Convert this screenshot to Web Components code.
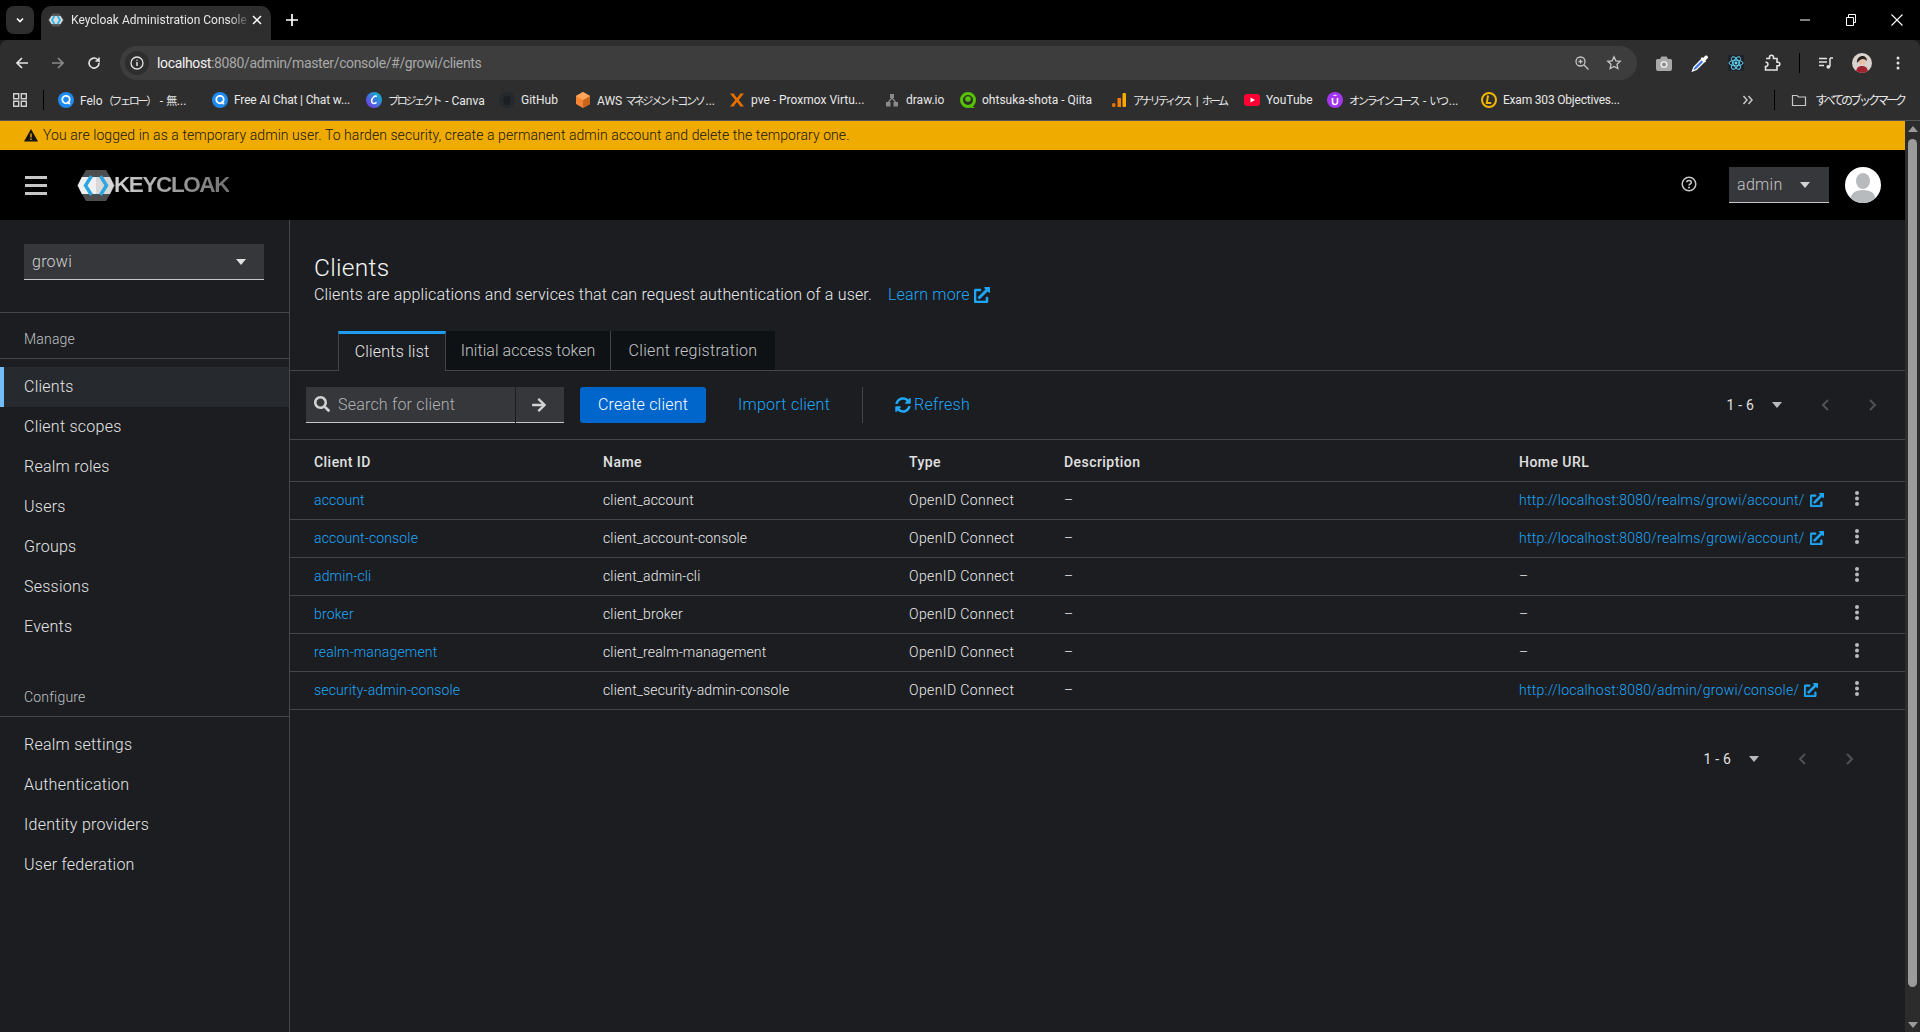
<!DOCTYPE html>
<html>
<head>
<meta charset="utf-8">
<title>Keycloak Administration Console</title>
<style>
  html, body { margin: 0; height: 100%; background: #1b1d21; overflow: hidden; }
  body { display: flex; flex-direction: column; font-family: Roboto, "Noto Sans CJK JP", sans-serif; }
  .under { display: flex; flex: 1; min-height: 0; }
  .page { flex: 1; min-width: 0; display: flex; flex-direction: column; }
  .work { flex: 1; display: flex; min-height: 0; }
  .cj { font-size: 11px; letter-spacing: -2.300px; margin-right: 2px; }
  .cj3 { font-size: 11px; letter-spacing: -2.700px; margin-right: 3px; }
</style>
</head>
<body>
<tab-strip></tab-strip>
<url-bar></url-bar>
<bookmark-bar>
  <book-mark w="154" icon="q">Felo<span class="cj">（フェロー）</span> - <span class="cj">無</span>...</book-mark>
  <book-mark w="154" icon="q" style="letter-spacing:-.15px">Free AI Chat | Chat w...</book-mark>
  <book-mark w="133" icon="c"><span class="cj">プロジェクト</span> - Canva</book-mark>
  <book-mark w="76" icon="gh">GitHub</book-mark>
  <book-mark w="154" icon="aws">AWS <span class="cj">マネジメントコンソ</span>...</book-mark>
  <book-mark w="155" icon="x">pve - Proxmox Virtu...</book-mark>
  <book-mark w="76" icon="draw">draw.io</book-mark>
  <book-mark w="151" icon="qiita">ohtsuka-shota - Qiita</book-mark>
  <book-mark w="133" icon="ga"><span class="cj3">アナリティクス</span> | <span class="cj3">ホーム</span></book-mark>
  <book-mark w="83" icon="yt">YouTube</book-mark>
  <book-mark w="154" icon="u"><span class="cj">オンラインコース</span> - <span class="cj">いつ</span>...</book-mark>
  <book-mark w="150" icon="l" style="letter-spacing:-.2px">Exam 303 Objectives...</book-mark>
</bookmark-bar>
<div class="under">
  <div class="page">
    <warn-banner>You are logged in as a temporary admin user. To harden security, create a permanent admin account and delete the temporary one.</warn-banner>
    <kc-masthead></kc-masthead>
    <div class="work">
      <kc-sidebar></kc-sidebar>
      <kc-clients></kc-clients>
    </div>
  </div>
  <page-scroll></page-scroll>
</div>

<script>
const ICONS = {
  q: `<circle cx="8" cy="8" r="8" fill="#1f8bf0"/><circle cx="8" cy="7.6" r="3.7" fill="none" stroke="#fff" stroke-width="1.8"/><path d="M9.5 9.5l2.4 2.6" stroke="#fff" stroke-width="1.8"/>`,
  c: `<defs><linearGradient id="cv" x1="0" y1="1" x2="1" y2="0"><stop offset="0" stop-color="#7d2ae8"/><stop offset="1" stop-color="#00c4cc"/></linearGradient></defs><circle cx="8" cy="8" r="8" fill="url(#cv)"/><path d="M10.8 4.6C9 2.9 5.8 6 5.6 9c-.2 2.700 2.600 3.200 5 1.300" fill="none" stroke="#fff" stroke-width="1.500"/>`,
  gh: `<circle cx="8" cy="8" r="8" fill="#24292e"/><path d="M5 13V10C3.800 8.500 4 6.500 4.800 5.500V3.800l1.800.8a6 6 0 0 1 2.800 0l1.800-.8v1.700c.8 1 1 3 -.2 4.500v3z" fill="#1b1f23"/>`,
  aws: `<path d="M8 0l7 4v8l-7 4-7-4V4z" fill="#f58534"/><path d="M8 8l7-4v8l-7 4z" fill="#c8641b"/><path d="M8 0l7 4-7 4-7-4z" fill="#ffa559"/>`,
  x: `<path d="M1 1.500h3.600L8 6l3.400-4.500H15L9.800 8l5.200 6.500h-3.600L8 10l-3.400 4.500H1L6.200 8z" fill="#e57000"/>`,
  draw: `<rect x="6" y="2" width="4" height="4" fill="#8a8a8a"/><rect x="2" y="10" width="4.500" height="4.500" fill="#8a8a8a"/><rect x="9.500" y="10" width="4.500" height="4.500" fill="#8a8a8a"/><path d="M8 6L4.500 10M8 6l3.500 4" stroke="#8a8a8a" stroke-width="1.200"/>`,
  qiita: `<circle cx="8" cy="8" r="6.500" fill="none" stroke="#55c500" stroke-width="3"/><circle cx="8" cy="7" r="2.800" fill="#55c500"/><path d="M12 14l3 2h-4z" fill="#55c500"/>`,
  ga: `<rect x="1" y="11" width="3.500" height="4" rx="1.500" fill="#e37400"/><rect x="6.500" y="6" width="3.500" height="9" fill="#f57c00"/><rect x="11.500" y="1" width="3.500" height="14" rx="1" fill="#f9ab00"/>`,
  yt: `<rect x="0" y="2" width="16" height="12" rx="3" fill="#ff0033"/><path d="M6.500 5.500v5L11 8z" fill="#fff"/>`,
  u: `<circle cx="8" cy="8" r="8" fill="#a435f0"/><path d="M5.500 6v4a2.500 2.500 0 0 0 5 0V6" fill="none" stroke="#fff" stroke-width="1.600"/><path d="M8 2.500l2.500 1.300H5.500z" fill="#fff"/>`,
  l: `<circle cx="8" cy="8" r="7" fill="none" stroke="#f2b400" stroke-width="2"/><path d="M7 3.500L5.800 11h4.400" fill="none" stroke="#f2b400" stroke-width="2"/>`
};
const EXT = `<svg viewBox="0 0 512 512" width="14" height="14" fill="currentColor" stroke="currentColor" stroke-width="18"><path d="M432 320h-32a16 16 0 0 0-16 16v112H64V128h144a16 16 0 0 0 16-16V80a16 16 0 0 0-16-16H48a48 48 0 0 0-48 48v352a48 48 0 0 0 48 48h352a48 48 0 0 0 48-48V336a16 16 0 0 0-16-16zM488 0H360c-21.400 0-32 25.900-17 41l35.700 35.700L135 320.400a24 24 0 0 0 0 34l22.600 22.600a24 24 0 0 0 34 0l243.700-243.700L471 169c15 15 41 4.500 41-17V24a24 24 0 0 0-24-24z"/></svg>`;

class TabStrip extends HTMLElement {
  constructor() {
    super();
    this.attachShadow({ mode: 'open' }).innerHTML = `<style>
      :host { display: flex; height: 40px; background: #000; color: #fff; font: 12px Roboto, sans-serif; align-items: flex-end; flex: none; }
      .sw { width: 28px; height: 28px; margin: 0 7px 6px 6px; border-radius: 8px; background: #2e2e2e; display: flex; align-items: center; justify-content: center; }
      .tab { width: 230px; height: 34px; background: #2e2e2e; border-radius: 10px 10px 0 0; display: flex; align-items: center; box-sizing: border-box; padding: 0 8px 6px 7px; }
      .tab span { flex: 1; margin-left: 7px; white-space: nowrap; overflow: hidden; color: #e6e6e6; -webkit-mask-image: linear-gradient(90deg,#000 88%,transparent); mask-image: linear-gradient(90deg,#000 88%,transparent); }
      .plus { margin: 0 0 6px 14px; height: 28px; display: flex; align-items: center; }
      .win { margin-left: auto; display: flex; height: 40px; align-items: center; padding-right: 15px; }
      .win svg { display: block; margin-left: 30px; }
    </style>
    <div class="sw"><svg width="12" height="12" viewBox="0 0 12 12"><path d="M3 4.500L6 7.500 9 4.500" fill="none" stroke="#fff" stroke-width="1.600"/></svg></div>
    <div class="tab">
      <svg width="16" height="16" viewBox="0 0 16 16"><path d="M4.500 1.500h7L16 8l-4.500 6.500h-7L0 8z" fill="#555"/><path d="M1 8l2.500-4h9L15 8l-2.500 4h-9z" fill="#dcdcdc"/><path d="M6.500 4L4 8l2.500 4M9.500 4L12 8l-2.500 4" fill="none" stroke="#2db5ee" stroke-width="1.800"/></svg>
      <span>Keycloak Administration Console</span>
      <svg width="12" height="12" viewBox="0 0 12 12"><path d="M2 2l8 8M10 2l-8 8" stroke="#fff" stroke-width="1.500"/></svg>
    </div>
    <div class="plus"><svg width="14" height="14" viewBox="0 0 14 14"><path d="M7 1v12M1 7h12" stroke="#fff" stroke-width="1.700"/></svg></div>
    <div class="win">
      <svg style="margin-left:0" width="16" height="16" viewBox="0 0 16 16"><path d="M3 8h10" stroke="#fff"/></svg>
      <svg width="16" height="16" viewBox="0 0 16 16"><path d="M3.500 5.500h7v8h-7zM5.500 5.500v-3h7v8h-2" fill="none" stroke="#fff"/></svg>
      <svg width="16" height="16" viewBox="0 0 16 16"><path d="M2.500 2.500l11 11M13.500 2.500l-11 11" stroke="#fff" stroke-width="1.100"/></svg>
    </div>`;
  }
}
customElements.define('tab-strip', TabStrip);

class UrlBar extends HTMLElement {
  constructor() {
    super();
    this.attachShadow({ mode: 'open' }).innerHTML = `<style>
      :host { display: flex; height: 40px; background: #2e2e2e; box-sizing: border-box; padding-top: 6px; align-items: stretch; flex: none; font: 14px Roboto, sans-serif; border-radius: 8px 8px 0 0; }
      .nav { width: 120px; display: flex; align-items: center; padding-left: 14px; gap: 20px; box-sizing: border-box; }
      .omni { width: 1517px; background: #3d3d3d; border-radius: 17px; display: flex; align-items: center; box-sizing: border-box; padding: 0 0 0 5px; }
      .i { width: 24px; height: 24px; border-radius: 50%; background: #2e2e2e; display: flex; align-items: center; justify-content: center; }
      .url { margin-left: 8px; color: #a8a8a8; flex: 1; letter-spacing: -.36px; }
      .url b { font-weight: 400; color: #f2f2f2; }
      .omni-end { display: flex; gap: 16px; padding-right: 15px; align-items: center; }
      .ext { display: flex; align-items: center; flex: 1; padding-left: 9px; }
      .slot { width: 36px; display: flex; align-items: center; justify-content: center; flex: none; }
      .sep { width: 1px; height: 20px; background: #000; margin: 0 8px 0 9px; flex: none; }
      svg { display: block; flex: none; }
    </style>
    <div class="nav">
      <svg width="16" height="16" viewBox="0 0 16 16"><path d="M14 8H3M8 3L3 8l5 5" fill="none" stroke="#e3e3e3" stroke-width="1.700"/></svg>
      <svg width="16" height="16" viewBox="0 0 16 16"><path d="M2 8h11M8 3l5 5-5 5" fill="none" stroke="#8a8a8a" stroke-width="1.700"/></svg>
      <svg width="16" height="16" viewBox="0 0 16 16"><path d="M13 8a5 5 0 1 1-1.500-3.500L13 6V2.500M13 6H9.500" fill="none" stroke="#e3e3e3" stroke-width="1.600"/></svg>
    </div>
    <div class="omni">
      <div class="i"><svg width="16" height="16" viewBox="0 0 16 16"><circle cx="8" cy="8" r="6" fill="none" stroke="#e3e3e3" stroke-width="1.300"/><path d="M8 7v4M8 4.800v1" stroke="#e3e3e3" stroke-width="1.500"/></svg></div>
      <div class="url"><b>localhost</b>:8080/admin/master/console/#/growi/clients</div>
      <div class="omni-end">
        <svg width="16" height="16" viewBox="0 0 16 16"><circle cx="6.500" cy="6.500" r="4.500" fill="none" stroke="#c7c7c7" stroke-width="1.300"/><path d="M10 10l4.500 4.500M4.500 6.500h4M6.500 4.500v4" stroke="#c7c7c7" stroke-width="1.300"/></svg>
        <svg width="16" height="16" viewBox="0 0 16 16"><path d="M8 1.800l1.900 4 4.300.5-3.200 3 .9 4.300L8 11.400l-3.900 2.200.9-4.300-3.200-3 4.300-.5z" fill="none" stroke="#c7c7c7" stroke-width="1.300"/></svg>
      </div>
    </div>
    <div class="ext">
      <div class="slot"><svg width="16" height="15" viewBox="0 0 16 15"><path d="M0 4.500q0-1.500 1.500-1.500H4L5.500 .5h5L12 3h2.500Q16 3 16 4.500V13q0 2-2 2H2q-2 0-2-2z" fill="#a8a8a8"/><circle cx="8" cy="8.500" r="3.600" fill="#e8e8e8"/><circle cx="8" cy="8.500" r="2" fill="#8a8a8a"/></svg></div>
      <div class="slot"><svg width="18" height="18" viewBox="0 0 18 18"><path d="M10.500 5.500L3 13l-1.500 4 4-1.500L13 8z" fill="#3f74e0" stroke="#fff" stroke-width="1.300"/><path d="M9.500 4l4.500 4.500 1.200-1.200-.8-.8 2.300-2.300c1.200-1.200-1.200-3.600-2.400-2.400L12 4.100l-.8-.8z" fill="#fff"/></svg></div>
      <div class="slot"><svg width="16" height="16" viewBox="0 0 16 16"><rect width="16" height="16" fill="#20232a"/><g fill="none" stroke="#61dafb" stroke-width=".9"><ellipse cx="8" cy="8" rx="7" ry="2.800"/><ellipse cx="8" cy="8" rx="7" ry="2.800" transform="rotate(60 8 8)"/><ellipse cx="8" cy="8" rx="7" ry="2.800" transform="rotate(120 8 8)"/></g><circle cx="8" cy="8" r="1.400" fill="#61dafb"/></svg></div>
      <div class="slot"><svg width="18" height="18" viewBox="0 0 18 18"><path d="M3 4.500h3.500V3.200a2 2 0 0 1 4 0v1.300H14v3.700h1a1.800 1.800 0 0 1 0 3.600h-1V16H2.500v-3.500h1a2.300 2.300 0 0 0 0-4.300h-1" fill="none" stroke="#e3e3e3" stroke-width="1.600"/></svg></div>
      <div class="sep"></div>
      <div class="slot"><svg width="16" height="16" viewBox="0 0 16 16"><path d="M1 3.500h8M1 7h8M1 10.500h5" stroke="#e3e3e3" stroke-width="1.300"/><path d="M12 3v8.500" stroke="#e3e3e3" stroke-width="1.500"/><circle cx="10.300" cy="11.800" r="1.900" fill="#e3e3e3"/><path d="M12 3h3" stroke="#e3e3e3" stroke-width="1.500"/></svg></div>
      <div class="slot"><svg width="20" height="20" viewBox="0 0 20 20"><defs><clipPath id="me"><circle cx="10" cy="10" r="10"/></clipPath></defs><g clip-path="url(#me)"><rect width="20" height="20" fill="#d9d2cc"/><path d="M4 20c0-6 3-7 6-7s6 1 6 7z" fill="#a3222f"/><circle cx="10" cy="8.500" r="3.300" fill="#e7bfa6"/><path d="M5 10C4 2 15 0 15 8c-3-3-6-3-10 2z" fill="#2b2522"/></g></svg></div>
      <div class="slot"><svg width="16" height="16" viewBox="0 0 16 16" fill="#e3e3e3"><circle cx="8" cy="3" r="1.500"/><circle cx="8" cy="8" r="1.500"/><circle cx="8" cy="13" r="1.500"/></svg></div>
    </div>`;
  }
}
customElements.define('url-bar', UrlBar);

class BookMark extends HTMLElement {
  connectedCallback() {
    if (this.shadowRoot) return;
    const w = this.getAttribute('w');
    this.attachShadow({ mode: 'open' }).innerHTML = `<style>
      :host { display: flex; align-items: center; width: ${w}px; flex: none; font: 12px Roboto, "Noto Sans CJK JP", sans-serif; color: #e8e8e8; white-space: nowrap; }
      svg { display: block; flex: none; margin-right: 6px; }
    </style><svg width="16" height="16" viewBox="0 0 16 16">${ICONS[this.getAttribute('icon')]}</svg><span><slot></slot></span>`;
  }
}
customElements.define('book-mark', BookMark);

class BookmarkBar extends HTMLElement {
  constructor() {
    super();
    this.attachShadow({ mode: 'open' }).innerHTML = `<style>
      :host { display: flex; align-items: center; height: 41px; box-sizing: border-box; background: #2e2e2e; border-bottom: 1px solid #555; flex: none; padding-bottom: 1px; font: 12px Roboto, "Noto Sans CJK JP", sans-serif; color: #e8e8e8; }
      .apps { width: 43px; display: flex; padding-left: 13px; box-sizing: border-box; }
      .sep { width: 1px; height: 20px; background: #000; flex: none; }
      .list { display: flex; margin-left: 14px; flex: 1; }
      .more { width: 32px; display: flex; }
      .tail { display: flex; align-items: center; padding-right: 13px; gap: 8px; white-space: nowrap; margin-left: 16px; }
      .tail span { letter-spacing: -3px; margin-right: 3px; }
      svg { display: block; flex: none; }
    </style>
    <div class="apps"><svg width="14" height="14" viewBox="0 0 14 14"><path d="M.7.7h5v5h-5zM8.300.7h5v5h-5zM.7 8.300h5v5h-5zM8.300 8.300h5v5h-5z" fill="none" stroke="#d0d0d0" stroke-width="1.400"/></svg></div>
    <div class="sep"></div>
    <div class="list"><slot></slot></div>
    <div class="more"><svg width="12" height="12" viewBox="0 0 12 12"><path d="M1.500 2L5 6l-3.500 4M6.500 2L10 6l-3.500 4" fill="none" stroke="#c7c7c7" stroke-width="1.500"/></svg></div>
    <div class="sep"></div>
    <div class="tail">
      <svg width="16" height="16" viewBox="0 0 16 16"><path d="M1.500 3.500h4.500l1.500 1.500h7v8.500h-13z" fill="none" stroke="#c7c7c7" stroke-width="1.200"/></svg>
      <span>すべてのブックマーク</span>
    </div>`;
  }
}
customElements.define('bookmark-bar', BookmarkBar);

class WarnBanner extends HTMLElement {
  constructor() {
    super();
    this.attachShadow({ mode: 'open' }).innerHTML = `<style>
      :host { display: flex; align-items: center; height: 29px; background: #f0ab00; color: #151515; font: 300 14px Roboto, sans-serif; letter-spacing: .07px; padding: 0 0 1px 24px; box-sizing: border-box; gap: 5px; flex: none; }
      svg { display: block; flex: none; }
    </style>
    <svg width="14" height="13" viewBox="0 0 14 13"><path d="M7 0l7 12.500H0z" fill="#151515"/><path d="M7 4.500v4M7 9.500v1.500" stroke="#f0ab00" stroke-width="1.400"/></svg><slot></slot>`;
  }
}
customElements.define('warn-banner', WarnBanner);

class KcMasthead extends HTMLElement {
  constructor() {
    super();
    this.attachShadow({ mode: 'open' }).innerHTML = `<style>
      :host { display: flex; align-items: center; height: 70px; background: #000; flex: none; font: 300 16px Roboto, sans-serif; color: #c7c7c7; }
      .burger { margin-left: 25px; width: 22px; height: 19px; display: flex; flex-direction: column; justify-content: space-between; }
      .burger i { display: block; height: 3px; background: #c7c7c7; }
      .logo { display: flex; align-items: center; margin-left: 30px; }
      .word { font: 700 22.500px "Liberation Sans", sans-serif; letter-spacing: -1.400px; margin-left: -1px; background: linear-gradient(90deg,#d2d2d2,#707070); -webkit-background-clip: text; background-clip: text; color: transparent; }
      .right { margin-left: auto; display: flex; align-items: center; }
      .sel { width: 100px; height: 36px; background: #36373a; border-bottom: 1px solid #c7c7c7; box-sizing: border-box; margin-left: 32px; display: flex; align-items: center; padding: 0 8px; letter-spacing: .3px; }
      .sel span { flex: 1; }
      .car { width: 0; height: 0; border: 5px solid transparent; border-top: 6px solid #d2d2d2; border-bottom: 0; margin-right: 11px; }
      .ava { width: 36px; height: 36px; margin: 0 24px 0 16px; display: block; }
      svg { display: block; }
      .help { margin-bottom: 2px; }
    </style>
    <div class="burger"><i></i><i></i><i></i></div>
    <div class="logo">
      <svg width="38" height="31" viewBox="0 0 38 31"><path d="M9 0h20l9 15.500L29 31H9L0 15.500z" fill="#4d4d4d"/><path d="M1 15.500L5 7h28l4 8.500L33 24H5z" fill="#d8d8d8"/><path d="M1 15.500L5 7h14v17H5z" fill="#f0f0f0"/><path d="M14.500 6L8.500 15.500l6 9.500M23.500 6l6 9.500-6 9.500" fill="none" stroke="#2aa5df" stroke-width="3.400"/></svg>
      <span class="word">KEYCLOAK</span>
    </div>
    <div class="right">
      <svg class="help" width="16" height="16" viewBox="0 0 16 16"><circle cx="8" cy="8" r="6.800" fill="none" stroke="#c7c7c7" stroke-width="1.500"/><path d="M5.800 6.300C6 4 10.300 4 10.300 6.400c0 1.700-2.300 1.500-2.300 3" fill="none" stroke="#c7c7c7" stroke-width="1.500"/><circle cx="8" cy="11.500" r="1" fill="#c7c7c7"/></svg>
      <div class="sel"><span>admin</span><div class="car"></div></div>
      <svg class="ava" viewBox="0 0 36 36"><defs><clipPath id="av"><circle cx="18" cy="18" r="18"/></clipPath></defs><circle cx="18" cy="18" r="18" fill="#fff"/><g clip-path="url(#av)" fill="#b8bbbe"><ellipse cx="18" cy="14" rx="7" ry="8"/><path d="M5 36c0-10 5-13 13-13s13 3 13 13z"/></g></svg>
    </div>`;
  }
}
customElements.define('kc-masthead', KcMasthead);

class KcSidebar extends HTMLElement {
  constructor() {
    super();
    const item = (t, on) => `<a class="${on ? 'on' : ''}">${t}</a>`;
    this.attachShadow({ mode: 'open' }).innerHTML = `<style>
      :host { display: flex; flex-direction: column; width: 290px; box-sizing: border-box; border-right: 1px solid #444548; flex: none; font: 300 16px Roboto, sans-serif; color: #e6e6e6; letter-spacing: .25px; }
      .realm { padding: 24px 25px 32px 24px; border-bottom: 1px solid #444548; }
      .sel { height: 36px; background: #36373a; border-bottom: 1px solid #c7c7c7; box-sizing: border-box; display: flex; align-items: center; padding: 0 18px 0 8px; justify-content: space-between; color: #d2d2d2; }
      .car { width: 0; height: 0; border: 5px solid transparent; border-top: 6px solid #e0e0e0; border-bottom: 0; }
      h3 { margin: 0; font: 300 14px Roboto, sans-serif; color: #c0c3c6; padding: 18px 24px 0; height: 27px; border-bottom: 1px solid #444548; box-sizing: content-box; letter-spacing: .2px; }
      .grp { padding-top: 8px; display: flex; flex-direction: column; }
      .grp + h3 { margin-top: 24px; }
      a { height: 40px; display: flex; align-items: center; padding: 0 0 2px 24px; box-sizing: border-box; }
      a.on { background: #26292d; border-left: 4px solid #73bcf7; padding-left: 20px; }
    </style>
    <div class="realm"><div class="sel"><span>growi</span><div class="car"></div></div></div>
    <h3>Manage</h3>
    <div class="grp">${item('Clients', 1)}${['Client scopes','Realm roles','Users','Groups','Sessions','Events'].map(t => item(t)).join('')}</div>
    <h3>Configure</h3>
    <div class="grp">${['Realm settings','Authentication','Identity providers','User federation'].map(t => item(t)).join('')}</div>`;
  }
}
customElements.define('kc-sidebar', KcSidebar);

class KcPager extends HTMLElement {
  constructor() {
    super();
    this.attachShadow({ mode: 'open' }).innerHTML = `<style>
      :host { display: flex; align-items: center; font: 14px Roboto, sans-serif; color: #e0e0e0; letter-spacing: .2px; }
      .car { width: 0; height: 0; border: 5px solid transparent; border-top: 6px solid #b8bbbe; border-bottom: 0; margin: 0 39px 0 18px; }
      svg { display: block; }
    </style>
    <span>1 - 6</span><div class="car"></div>
    <svg width="9" height="12" viewBox="0 0 9 12"><path d="M7 1L2 6l5 5" fill="none" stroke="#4f5255" stroke-width="2"/></svg>
    <svg style="margin-left:38px" width="9" height="12" viewBox="0 0 9 12"><path d="M2 1l5 5-5 5" fill="none" stroke="#4f5255" stroke-width="2"/></svg>`;
  }
}
customElements.define('kc-pager', KcPager);

class ClientRow extends HTMLElement {
  connectedCallback() {
    if (this.shadowRoot) return;
    const id = this.getAttribute('cid'), home = this.getAttribute('home');
    this.attachShadow({ mode: 'open' }).innerHTML = `<style>
      :host { display: grid; grid-template-columns: var(--cols); height: 38px; align-items: center; box-sizing: border-box; border-bottom: 1px solid #444548; padding-bottom: 1px; font: 300 14px Roboto, sans-serif; color: #ececec; letter-spacing: .15px; }
      a { color: #1fa7f8; display: flex; align-items: center; gap: 5px; }
      a.u { letter-spacing: .25px; }
      .t { letter-spacing: .4px; }
      svg { display: block; }
      .k { justify-self: start; margin: -3px 0 0 -2px; }
    </style>
    <a>${id}</a><span>client_${id}</span><span class="t">OpenID Connect</span><span>–</span>
    ${home ? `<a class="u">${home}${EXT}</a>` : '<span>–</span>'}
    <svg class="k" width="4" height="15" viewBox="0 0 4 15" fill="#b8bbbe"><circle cx="2" cy="2" r="2"/><circle cx="2" cy="7.500" r="2"/><circle cx="2" cy="13" r="2"/></svg>`;
  }
}
customElements.define('client-row', ClientRow);

class KcClients extends HTMLElement {
  constructor() {
    super();
    this.attachShadow({ mode: 'open' }).innerHTML = `<style>
      :host { display: block; flex: 1; min-width: 0; color: #e0e0e0; font: 14px Roboto, sans-serif; --cols: 289px 306px 155px 455px 338px 1fr; }
      .head { padding: 34px 24px 0; height: 77px; }
      h1 { margin: 0; font: 300 24.500px/28px Roboto, sans-serif; letter-spacing: .3px; color: #f4f4f4; }
      p { margin: 2px 0 0; font-size: 16px; font-weight: 300; line-height: 22px; letter-spacing: .165px; display: flex; align-items: center; color: #ececec; }
      p a { color: #1fa7f8; margin-left: 16px; display: flex; align-items: center; gap: 4px; }
      .tabs { display: flex; padding-left: 48px; height: 39px; border-bottom: 1px solid #444548; font-size: 16px; font-weight: 300; letter-spacing: .3px; }
      .t { display: flex; align-items: center; justify-content: center; background: #0f1214; color: #c4c7ca; border-right: 1px solid #444548; box-sizing: border-box; height: 39px; }
      .t.on { background: #1b1d21; color: #ececec; border-top: 3px solid #1f9bf0; border-left: 1px solid #444548; height: 40px; padding-bottom: 2px; }
      .t.last { border-right: 0; }
      .bar { display: flex; align-items: center; height: 68px; padding: 0 0 0 16px; border-bottom: 1px solid #444548; font-size: 16px; font-weight: 300; letter-spacing: .2px; }
      .search { width: 209px; height: 36px; background: #36373a; border-bottom: 1px solid #c7c7c7; box-sizing: border-box; display: flex; align-items: center; padding: 0 0 1px 8px; gap: 8px; color: #b0b3b6; }
      .go { width: 48px; height: 36px; margin-left: 1px; background: #36373a; border-bottom: 1px solid #c7c7c7; box-sizing: border-box; display: flex; align-items: center; justify-content: center; padding-right: 2px; }
      .btn { width: 126px; height: 36px; background: #06c; color: #fff; border-radius: 3px; margin-left: 16px; display: flex; align-items: center; justify-content: center; padding-bottom: 1px; box-sizing: border-box; }
      .lnk { color: #1fa7f8; display: flex; align-items: center; padding-bottom: 1px; letter-spacing: .25px; }
      .div { width: 1px; height: 36px; background: #444548; margin: 0 32px; }
      kc-pager { margin-left: auto; margin-right: 28px; }
      .th { display: grid; grid-template-columns: var(--cols); height: 42px; align-items: center; border-bottom: 1px solid #444548; font-weight: 500; letter-spacing: .45px; padding: 2px 0 0 24px; color: #e0e0e0; box-sizing: border-box; }
      .foot { display: flex; justify-content: flex-end; margin-top: 41px; padding-right: 51px; }
      svg { display: block; flex: none; }
      client-row { padding-left: 24px; }
    </style>
    <div class="head">
      <h1>Clients</h1>
      <p>Clients are applications and services that can request authentication of a user.<a>Learn more ${EXT.replace('width="14" height="14"', 'width="16" height="16"')}</a></p>
    </div>
    <div class="tabs">
      <div class="t on" style="width:108px;letter-spacing:.2px">Clients list</div>
      <div class="t" style="width:165px;letter-spacing:.05px">Initial access token</div>
      <div class="t last" style="width:164px">Client registration</div>
    </div>
    <div class="bar">
      <div class="search"><svg width="16" height="16" viewBox="0 0 512 512" fill="#d2d2d2"><path d="M505 442.700L405.300 343c-4.500-4.500-10.600-7-17-7H372c27.600-35.300 44-79.700 44-128C416 93.100 322.900 0 208 0S0 93.100 0 208s93.100 208 208 208c48.300 0 92.700-16.400 128-44v16.300c0 6.400 2.500 12.500 7 17l99.700 99.700c9.400 9.400 24.600 9.400 33.900 0l28.300-28.300c9.400-9.400 9.400-24.600.1-34zM208 336c-70.700 0-128-57.200-128-128 0-70.700 57.200-128 128-128 70.700 0 128 57.200 128 128 0 70.700-57.200 128-128 128z"/></svg>Search for client</div>
      <div class="go"><svg width="14" height="16" viewBox="0 0 448 512" fill="#d2d2d2"><path d="M190.500 66.900l22.200-22.200c9.400-9.400 24.600-9.400 33.900 0L441 239c9.400 9.400 9.400 24.600 0 33.900L246.600 467.300c-9.400 9.400-24.600 9.400-33.900 0l-22.200-22.200c-9.500-9.500-9.300-25 .4-34.300L311.400 296H24c-13.300 0-24-10.700-24-24v-32c0-13.300 10.700-24 24-24h287.400L190.900 101.200c-9.800-9.300-10-24.800-.4-34.300z"/></svg></div>
      <div class="btn">Create client</div>
      <div class="lnk" style="margin-left:32px">Import client</div>
      <div class="div"></div>
      <div class="lnk" style="gap:3px"><svg width="16" height="16" viewBox="0 0 512 512" fill="#1fa7f8"><path d="M370.720 133.280C339.458 104.008 298.888 87.962 255.848 88c-77.458.068-144.328 53.178-162.791 126.850-1.344 5.363-6.122 9.150-11.651 9.150H24.103c-7.498 0-13.194-6.807-11.807-14.176C33.933 94.924 134.813 8 256 8c66.448 0 126.791 26.136 171.315 68.685L463.030 40.970C478.149 25.851 504 36.559 504 57.941V192c0 13.255-10.745 24-24 24H345.941c-21.382 0-32.090-25.851-16.971-40.971l41.750-41.749zM32 296h134.059c21.382 0 32.090 25.851 16.971 40.971l-41.750 41.750c31.262 29.273 71.835 45.319 114.876 45.280 77.418-.070 144.315-53.144 162.787-126.849 1.344-5.363 6.122-9.150 11.651-9.150h57.304c7.498 0 13.194 6.807 11.807 14.176C478.067 417.076 377.187 504 256 504c-66.448 0-126.791-26.136-171.315-68.685L48.970 471.030C33.851 486.149 8 475.441 8 454.059V320c0-13.255 10.745-24 24-24z"/></svg>Refresh</div>
      <kc-pager></kc-pager>
    </div>
    <div class="th"><span>Client ID</span><span>Name</span><span>Type</span><span>Description</span><span>Home URL</span><span></span></div>
    <client-row cid="account" home="http://localhost:8080/realms/growi/account/"></client-row>
    <client-row cid="account-console" home="http://localhost:8080/realms/growi/account/"></client-row>
    <client-row cid="admin-cli"></client-row>
    <client-row cid="broker"></client-row>
    <client-row cid="realm-management"></client-row>
    <client-row cid="security-admin-console" home="http://localhost:8080/admin/growi/console/"></client-row>
    <div class="foot"><kc-pager style="margin:0"></kc-pager></div>`;
  }
}
customElements.define('kc-clients', KcClients);

class PageScroll extends HTMLElement {
  constructor() {
    super();
    this.attachShadow({ mode: 'open' }).innerHTML = `<style>
      :host { display: flex; flex-direction: column; align-items: center; width: 15px; background: #2c2c2c; flex: none; }
      .a { width: 0; height: 0; border: 5px solid transparent; margin-top: 5px; }
      .up { border-bottom: 6px solid #9b9b9b; border-top: 0; }
      .dn { border-top: 6px solid #9b9b9b; border-bottom: 0; margin: auto 0 4px; }
      .thumb { width: 9px; height: 848px; margin-top: 7px; background: #9b9b9b; border-radius: 5px; }
    </style><div class="a up"></div><div class="thumb"></div><div class="a dn"></div>`;
  }
}
customElements.define('page-scroll', PageScroll);
</script>
</body>
</html>
